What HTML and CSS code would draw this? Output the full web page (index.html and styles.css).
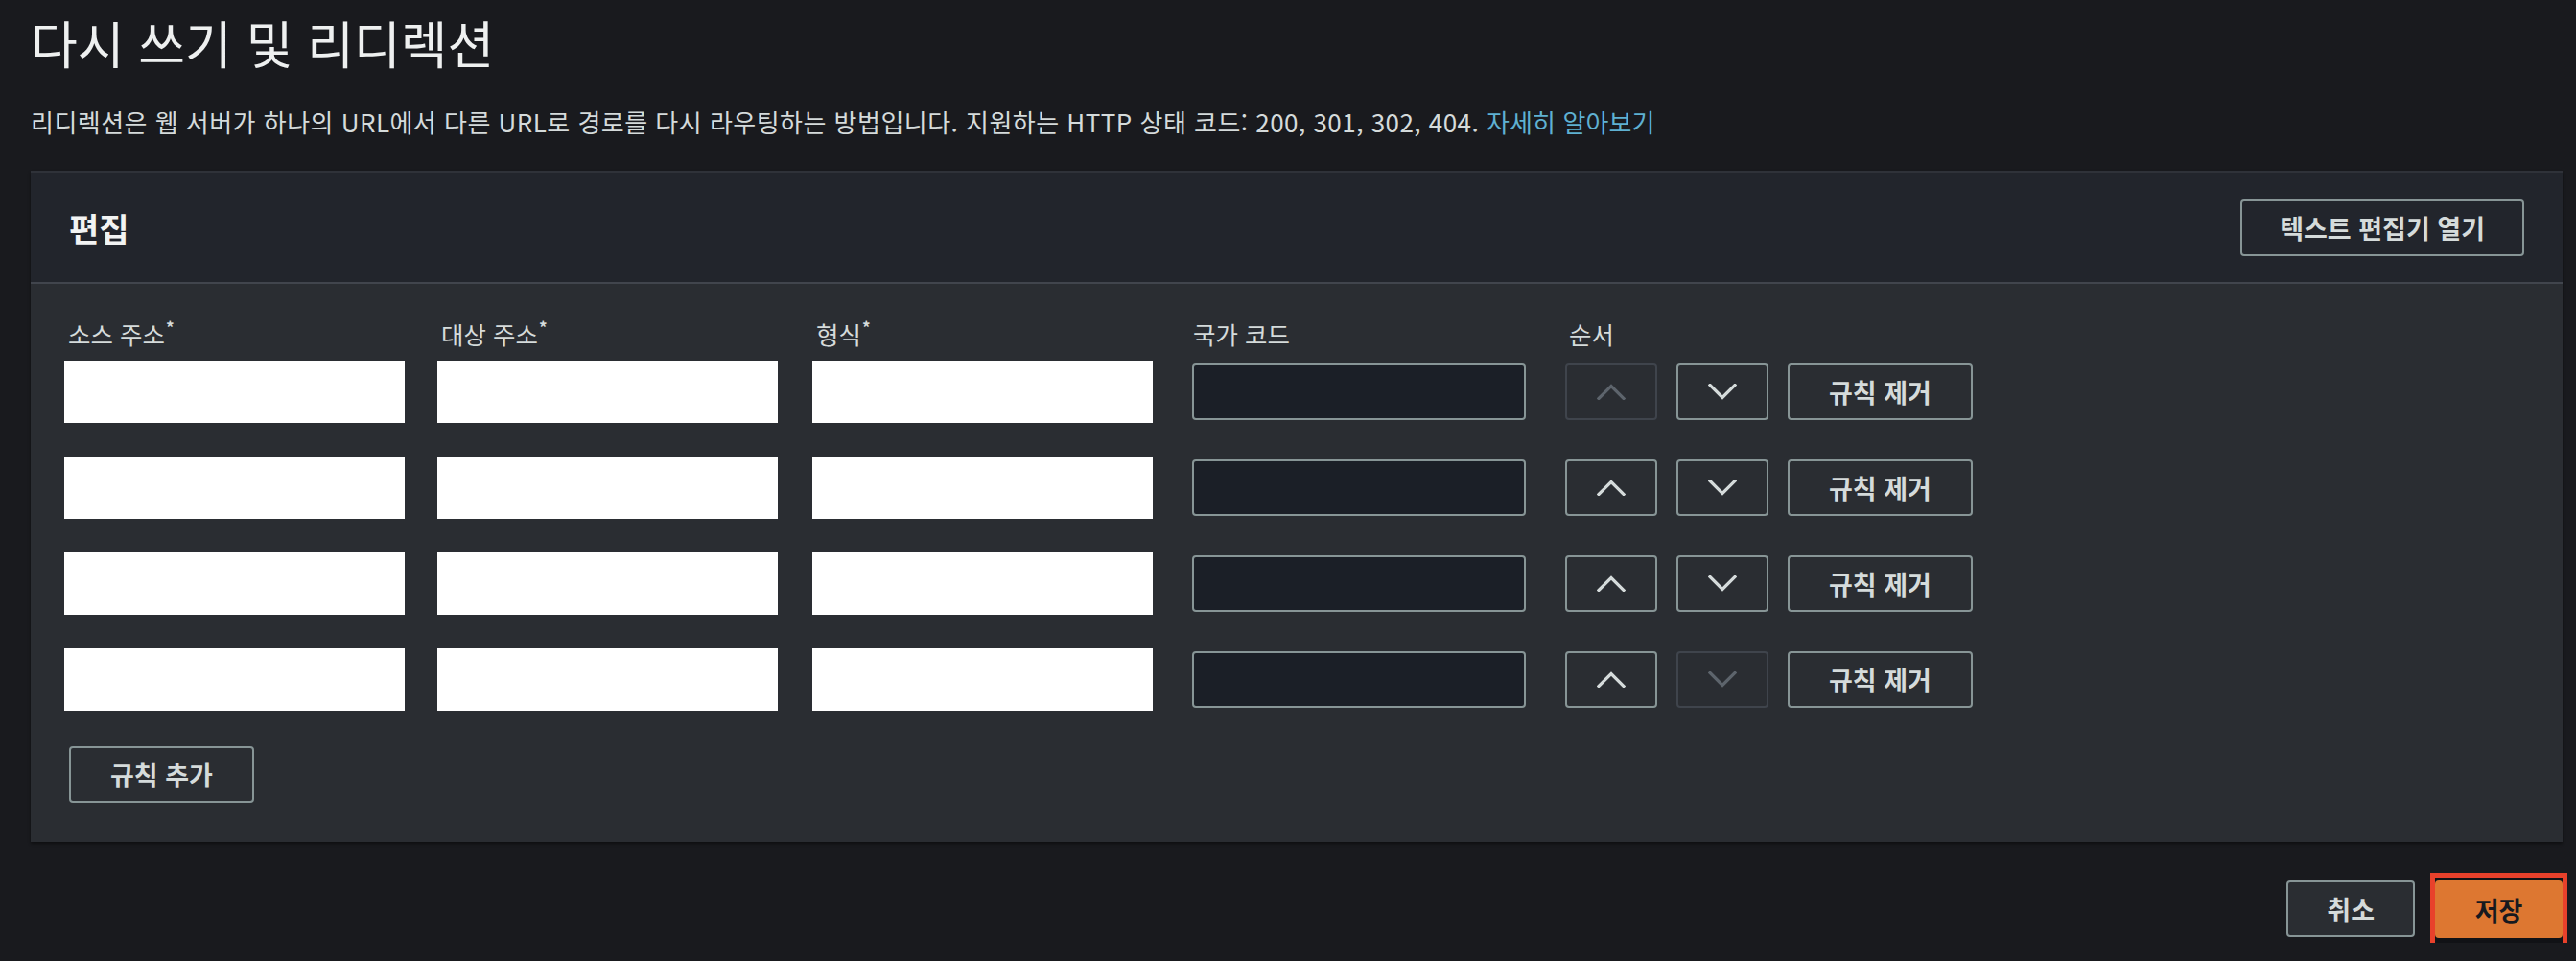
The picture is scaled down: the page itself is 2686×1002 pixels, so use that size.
FILE: index.html
```html
<!DOCTYPE html>
<html lang="ko">
<head>
<meta charset="utf-8">
<title>다시 쓰기 및 리디렉션</title>
<link rel="stylesheet" href="styles.css">
</head>
<body>
<div class="page">
  <h1 class="title">다시 쓰기 및 리디렉션</h1>
  <p class="desc">리디렉션은 웹 서버가 하나의 URL에서 다른 URL로 경로를 다시 라우팅하는 방법입니다. 지원하는 HTTP 상태 코드: 200, 301, 302, 404. <a class="link" href="#">자세히 알아보기</a></p>

  <section class="panel">
    <header class="panel-head">
      <h2 class="panel-title">편집</h2>
      <button class="btn head-btn">텍스트 편집기 열기</button>
    </header>
    <div class="panel-body">
      <div class="cols labels">
        <div class="label">소스 주소<span class="req">*</span></div>
        <div class="label">대상 주소<span class="req">*</span></div>
        <div class="label">형식<span class="req">*</span></div>
        <div class="label">국가 코드</div>
        <div class="label">순서</div>
      </div>
      <div class="cols rules">
        <div class="cell"><div class="field-white"></div></div>
        <div class="cell"><div class="field-white"></div></div>
        <div class="cell"><div class="field-white"></div></div>
        <div class="cell"><div class="field-dark"></div></div>
        <div class="order">
          <button class="btn icon disabled"><svg viewBox="0 0 30 17" class="chev"><polyline points="2,15.5 15,2.5 28,15.5"/></svg></button>
          <button class="btn icon"><svg viewBox="0 0 30 17" class="chev"><polyline points="2,1.5 15,14.5 28,1.5"/></svg></button>
          <button class="btn">규칙 제거</button>
        </div>

        <div class="cell"><div class="field-white"></div></div>
        <div class="cell"><div class="field-white"></div></div>
        <div class="cell"><div class="field-white"></div></div>
        <div class="cell"><div class="field-dark"></div></div>
        <div class="order">
          <button class="btn icon"><svg viewBox="0 0 30 17" class="chev"><polyline points="2,15.5 15,2.5 28,15.5"/></svg></button>
          <button class="btn icon"><svg viewBox="0 0 30 17" class="chev"><polyline points="2,1.5 15,14.5 28,1.5"/></svg></button>
          <button class="btn">규칙 제거</button>
        </div>

        <div class="cell"><div class="field-white"></div></div>
        <div class="cell"><div class="field-white"></div></div>
        <div class="cell"><div class="field-white"></div></div>
        <div class="cell"><div class="field-dark"></div></div>
        <div class="order">
          <button class="btn icon"><svg viewBox="0 0 30 17" class="chev"><polyline points="2,15.5 15,2.5 28,15.5"/></svg></button>
          <button class="btn icon"><svg viewBox="0 0 30 17" class="chev"><polyline points="2,1.5 15,14.5 28,1.5"/></svg></button>
          <button class="btn">규칙 제거</button>
        </div>

        <div class="cell"><div class="field-white"></div></div>
        <div class="cell"><div class="field-white"></div></div>
        <div class="cell"><div class="field-white"></div></div>
        <div class="cell"><div class="field-dark"></div></div>
        <div class="order">
          <button class="btn icon"><svg viewBox="0 0 30 17" class="chev"><polyline points="2,15.5 15,2.5 28,15.5"/></svg></button>
          <button class="btn icon disabled"><svg viewBox="0 0 30 17" class="chev"><polyline points="2,1.5 15,14.5 28,1.5"/></svg></button>
          <button class="btn">규칙 제거</button>
        </div>
      </div>
      <button class="btn add">규칙 추가</button>
    </div>
  </section>

  <div class="actions">
    <button class="btn cancel">취소</button>
    <button class="save"><span class="save-face">저장</span></button>
  </div>
</div>
</body>
</html>
```

FILE: styles.css
```css
* { box-sizing: border-box; }

html, body {
  margin: 0;
  background: #191a1e;
}

body {
  font-family: "Noto Sans CJK KR", "Noto Sans", sans-serif;
  color: #d5dbdb;
}

.page {
  padding: 14px 14px 0 32px;
}

.title {
  margin: 0;
  font-size: 53px;
  font-weight: 400;
  line-height: 60px;
  color: #eef0f0;
}

.desc {
  margin: 35px 0 0;
  font-size: 26px;
  line-height: 36px;
  letter-spacing: 0.47px;
  color: #d5dbdb;
}

.link {
  color: #5fb1d2;
  text-decoration: none;
  letter-spacing: 0.1px;
}

.panel {
  margin-top: 33px;
  background: #2a2d32;
  box-shadow: 0 2px 3px rgba(0, 0, 0, 0.45);
}

.panel-head {
  display: flex;
  align-items: center;
  justify-content: space-between;
  padding: 28px 40px 27px 40px;
  background: #22252c;
  border-top: 2px solid #2f3239;
  border-bottom: 2px solid #41454d;
}

.panel-title {
  margin: 0;
  font-size: 34px;
  font-weight: 700;
  line-height: 40px;
  color: #f2f3f3;
}

.panel-body {
  padding: 34px 0 41px 35px;
}

.cols {
  display: grid;
  grid-template-columns: 389px 391px 393px 392px auto;
}

.labels {
  margin-bottom: 10px;
}

.label {
  font-size: 25.5px;
  line-height: 36px;
  padding-left: 4px;
  color: #d5dbdb;
}

.req {
  font-size: 17px;
  font-weight: 700;
  vertical-align: top;
  line-height: 22px;
  margin-left: 1px;
}

.rules {
  row-gap: 35px;
}

.cell {
  display: flex;
  align-items: center;
}

.field-white {
  width: 355px;
  height: 65px;
  background: #ffffff;
}

.field-dark {
  width: 348px;
  height: 59px;
  margin-left: 3px;
  background: #1b1f27;
  border: 2px solid #879596;
  border-radius: 4px;
}

.order {
  display: flex;
  align-items: center;
  gap: 20px;
}

.btn {
  display: inline-flex;
  align-items: center;
  justify-content: center;
  height: 59px;
  padding: 0 41px;
  background: transparent;
  border: 2px solid #879596;
  border-radius: 4px;
  font-family: "Noto Sans CJK KR", "Noto Sans", sans-serif;
  font-size: 27px;
  font-weight: 700;
  color: #d5dbdb;
  line-height: 1;
  white-space: nowrap;
}

.head-btn {
  padding: 0 39px;
}

.btn.icon {
  width: 96px;
  padding: 0;
}

.chev {
  width: 30px;
  height: 17px;
  fill: none;
  stroke: #d5dbdb;
  stroke-width: 3.2;
  stroke-linecap: square;
}

.btn.disabled {
  border-color: #3f444c;
}

.btn.disabled .chev {
  stroke: #5d646c;
}

.add {
  margin: 37px 0 0 5px;
}

.actions {
  display: flex;
  justify-content: flex-end;
  align-items: flex-start;
  gap: 21px;
  margin-top: 37px;
}

.cancel {
  margin-top: 3px;
  padding: 0 40px;
  background: #2a2d32;
}

.save {
  display: block;
  padding: 3px 0 5px;
  margin: 0;
  border: 0;
  background: #111216;
  outline: 5px solid #e8412b;
  font-family: "Noto Sans CJK KR", "Noto Sans", sans-serif;
}

.save-face {
  display: flex;
  align-items: center;
  justify-content: center;
  width: 133px;
  height: 60px;
  background: #dd7731;
  border-radius: 4px;
  font-size: 27px;
  font-weight: 700;
  color: #16191f;
}
```
